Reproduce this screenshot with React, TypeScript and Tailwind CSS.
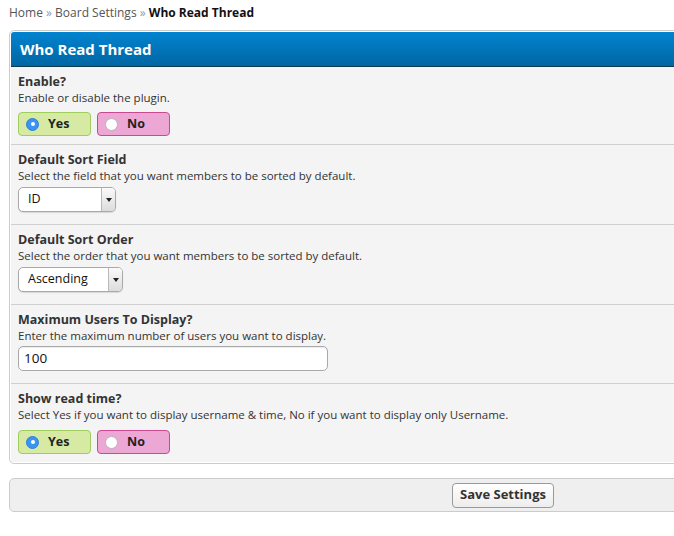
import React from "react";

const font = { fontFamily: '"Open Sans", "DejaVu Sans", sans-serif' };

function Radio({ yes, checked }: { yes: boolean; checked: boolean }) {
  return (
    <div
      className={
        "flex items-center w-[73px] h-[24px] rounded-[4px] border pl-[7px] " +
        (yes ? "bg-[#d6eaa4] border-[#9fcd5e]" : "bg-[#eca7d5] border-[#c94a93]")
      }
    >
      {checked ? (
        <span className="w-[13px] h-[13px] rounded-full bg-[#3b93f2] border border-[#2f7fd6] flex items-center justify-center">
          <span className="w-[4px] h-[4px] rounded-full bg-white" />
        </span>
      ) : (
        <span className="w-[13px] h-[13px] rounded-full bg-white border border-[#b5b5b5]" />
      )}
      <span className="ml-[9px] text-[12.5px] font-bold text-[#222]">{yes ? "Yes" : "No"}</span>
    </div>
  );
}

function Select({ value, w }: { value: string; w: string }) {
  return (
    <div className={"flex h-[25px] rounded-[5px] border border-[#a9a9a9] bg-white overflow-hidden shadow-[0_1px_1px_rgba(0,0,0,0.12)] " + w}>
      <div className="flex-1 flex items-center pl-[9px] text-[12.5px] text-[#111]">{value}</div>
      <div className="w-[14px] border-l border-[#b9b9b9] bg-gradient-to-b from-[#fafafa] to-[#dcdcdc] flex items-center justify-center">
        <svg width="6" height="4" viewBox="0 0 6 4"><path d="M0 0h6L3 4z" fill="#222" /></svg>
      </div>
    </div>
  );
}

function Row({ label, desc, children, pb, mt, last }: { label: string; desc: string; children: React.ReactNode; pb: string; mt: string; last?: boolean }) {
  return (
    <div className={"bg-[#f4f4f4] px-[7px] pt-[6px] " + pb + (last ? "" : " border-b border-[#d0d0d0]")}>
      <div className="text-[12.5px] leading-[17px] font-bold text-[#333]">{label}</div>
      <div className="text-[11.5px] leading-[15px] text-[#333]">{desc}</div>
      <div className={mt}>{children}</div>
    </div>
  );
}

export default function App() {
  return (
    <div className="w-full overflow-hidden bg-white min-h-[536px]" style={font}>
      <div className="w-[1000px] pl-[9px] pt-[5px]">
        <div className="text-[12px] leading-[16px] text-[#555]">
          Home <span className="text-[#999]">»</span> Board Settings <span className="text-[#999]">»</span>{" "}
          <span className="font-bold text-[#111]">Who Read Thread</span>
        </div>
        <div className="mt-[9px] w-[988px] border border-[#cccccc] rounded-[5px] bg-white p-[1px] overflow-hidden">
          <div className="h-[35px] bg-gradient-to-b from-[#0284d0] to-[#0066a3] border-b border-[#123a4a] flex items-center pl-[9px] rounded-t-[3px]">
            <span className="text-[15px] font-bold text-white">Who Read Thread</span>
          </div>
          <Row label="Enable?" desc="Enable or disable the plugin." mt="mt-[7px]" pb="pb-[8px]">
            <div className="flex gap-[6px]">
              <Radio yes checked />
              <Radio yes={false} checked={false} />
            </div>
          </Row>
          <Row label="Default Sort Field" desc="Select the field that you want members to be sorted by default." mt="mt-[4px]" pb="pb-[12px]">
            <Select value="ID" w="w-[98px]" />
          </Row>
          <Row label="Default Sort Order" desc="Select the order that you want members to be sorted by default." mt="mt-[4px]" pb="pb-[12px]">
            <Select value="Ascending" w="w-[105px]" />
          </Row>
          <Row label="Maximum Users To Display?" desc="Enter the maximum number of users you want to display." mt="mt-[3px]" pb="pb-[12px]">
            <div className="w-[310px] h-[25px] rounded-[5px] border border-[#a9a9a9] bg-white flex items-center pl-[5px] text-[13.5px] text-[#111] shadow-[inset_0_1px_1px_rgba(0,0,0,0.08)]">
              100
            </div>
          </Row>
          <Row
            label="Show read time?"
            desc="Select Yes if you want to display username & time, No if you want to display only Username."
            mt="mt-[8px]"
            pb="pb-[8px]"
            last
          >
            <div className="flex gap-[6px]">
              <Radio yes checked />
              <Radio yes={false} checked={false} />
            </div>
          </Row>
        </div>
        <div className="mt-[14px] w-[988px] h-[34px] rounded-[5px] border border-[#cccccc] bg-[#efefef] flex items-center justify-center">
          <div className="h-[25px] px-[7px] rounded-[4px] border border-[#9a9a9a] bg-gradient-to-b from-white to-[#ededed] flex items-center text-[13px] font-bold text-[#333]">
            Save Settings
          </div>
        </div>
      </div>
    </div>
  );
}
